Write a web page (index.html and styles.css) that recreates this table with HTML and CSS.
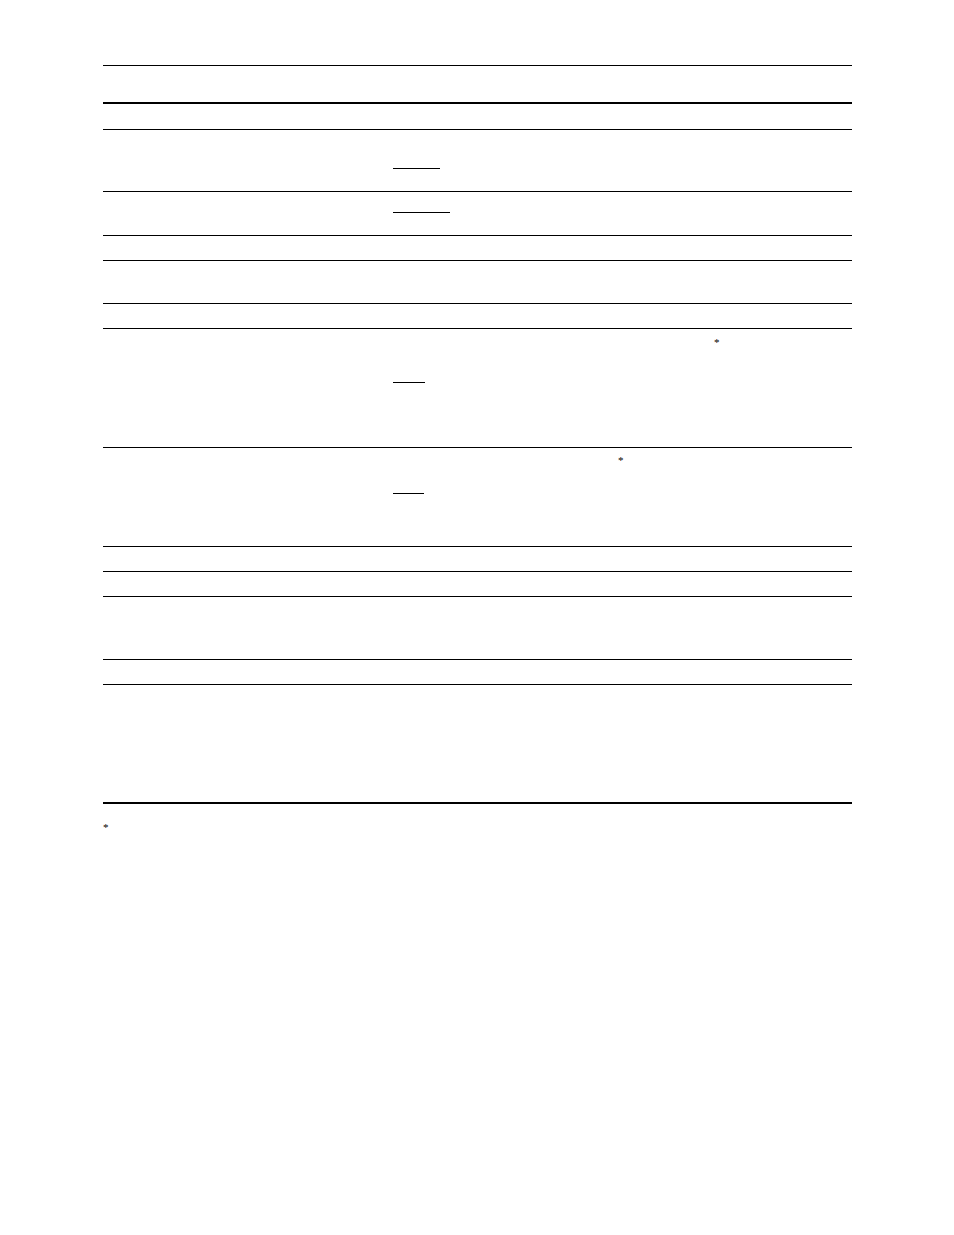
FILE: index.html
```html
<!DOCTYPE html>
<html>
<head>
<meta charset="utf-8">
<link rel="stylesheet" href="styles.css">
</head>
<body>
<div class="page">
  <div class="table">
    <div class="row r-top h37"></div>
    <div class="row r-head h27"></div>
    <div class="row h62"><div class="c1"></div><div class="c2"><div class="ul w47 m38"></div></div></div>
    <div class="row h44"><div class="c1"></div><div class="c2"><div class="ul w57 m20"></div></div></div>
    <div class="row h25"></div>
    <div class="row h43"></div>
    <div class="row h25"></div>
    <div class="row h119"><div class="c1"></div><div class="c2"><div class="ast a1">*</div><div class="ul w32 m34"></div></div></div>
    <div class="row h99"><div class="c1"></div><div class="c2"><div class="ast a2">*</div><div class="ul w31 m27"></div></div></div>
    <div class="row h25"></div>
    <div class="row h25"></div>
    <div class="row h63"></div>
    <div class="row h25"></div>
    <div class="row h118"></div>
    <div class="row r-bottom"></div>
  </div>
  <div class="note"><span class="ast">*</span></div>
</div>
</body>
</html>
```

FILE: styles.css
```css
* { box-sizing: border-box; }
html, body { margin: 0; padding: 0; background: #fff; }
body { font-family: "Liberation Serif", "Times New Roman", serif; color: #000; }
.page { width: 954px; height: 1235px; padding-top: 65px; padding-left: 103px; }
.table { width: 749px; }
.row { display: grid; grid-template-columns: 290px 1fr; border-top: 1px solid #000; }
.r-head { border-top: 2px solid #000; }
.r-bottom { border-top: 2px solid #000; height: 2px; }
.h25 { height: 25px; }
.h27 { height: 27px; }
.h37 { height: 37px; }
.h43 { height: 43px; }
.h44 { height: 44px; }
.h62 { height: 62px; }
.h63 { height: 63px; }
.h99 { height: 99px; }
.h118 { height: 118px; }
.h119 { height: 119px; }
.c2 { display: flex; flex-direction: column; align-items: flex-start; }
.ul { height: 1px; background: #000; }
.w31 { width: 31px; }
.w32 { width: 32px; }
.w47 { width: 47px; }
.w57 { width: 57px; }
.m20 { margin-top: 20px; }
.m27 { margin-top: 27px; }
.m34 { margin-top: 34px; }
.m38 { margin-top: 38px; }
.ast { font-size: 11px; line-height: 11px; height: 11px; color: #000; -webkit-font-smoothing: antialiased; }
.a1 { margin-top: 8px; margin-left: 321px; }
.a2 { margin-top: 7px; margin-left: 225px; }
.note { padding-top: 18px; padding-left: 0; }
.note .ast { display: block; }
```
